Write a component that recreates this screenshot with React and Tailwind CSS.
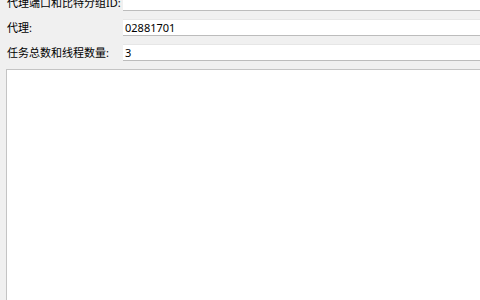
const rows = [
  { label: "代理端口和比特分组ID:", value: "" },
  { label: "代理:", value: "02881701" },
  { label: "任务总数和线程数量:", value: "3" },
];

export default function App() {
  return (
    <div
      className="w-[480px] h-[300px] overflow-hidden bg-[#f0f0f0] text-[11px] text-black flex flex-col"
      style={{ fontFamily: '"Noto Sans", "Noto Sans CJK SC", sans-serif' }}
    >
      <div className="flex flex-col gap-[8px] mt-[-6px]">
        {rows.map((row) => (
          <div key={row.label} className="flex items-center h-[17px]">
            <span className="w-[123px] shrink-0 pl-[7px] leading-none whitespace-nowrap">
              {row.label}
            </span>
            <div className="flex-1 h-[17px] bg-white border-t border-[#e6e6e6] border-b border-b-[#bcbcbc] flex items-center pl-[2px] leading-none">
              {row.value}
            </div>
          </div>
        ))}
      </div>
      <div className="flex-1 ml-[6px] mt-[8px] bg-white border-l border-t border-[#c4c4c4]" />
    </div>
  );
}
